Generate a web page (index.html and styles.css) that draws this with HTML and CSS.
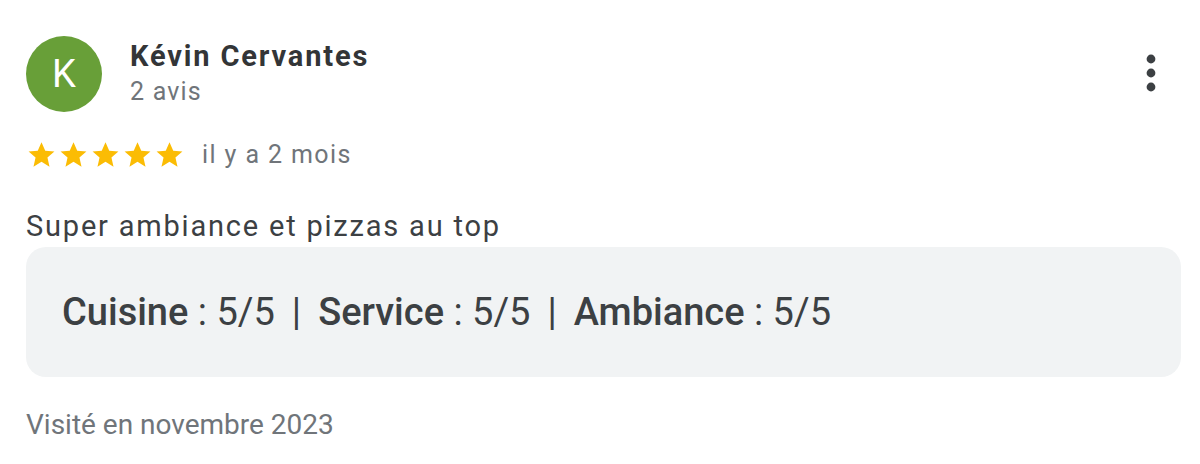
FILE: index.html
```html
<!DOCTYPE html>
<html lang="fr">
<head>
<meta charset="utf-8">
<link rel="stylesheet" href="styles.css">
</head>
<body>
<div class="review">
  <div class="header">
    <div class="avatar">K</div>
    <div class="who">
      <div class="name">Kévin Cervantes</div>
      <div class="count">2 avis</div>
    </div>
    <button class="more" aria-label="Plus">
      <svg width="12" height="40" viewBox="0 0 12 40"><circle cx="6" cy="6" r="4.4"/><circle cx="6" cy="20" r="4.4"/><circle cx="6" cy="34" r="4.4"/></svg>
    </button>
  </div>
  <div class="rating">
    <div class="stars">
      <svg viewBox="0 0 24 24"><path d="M12 2.5l2.9 6.6 7.1.6-5.4 4.7 1.6 7-6.2-3.7-6.2 3.7 1.6-7L2 9.7l7.1-.6z"/></svg>
      <svg viewBox="0 0 24 24"><path d="M12 2.5l2.9 6.6 7.1.6-5.4 4.7 1.6 7-6.2-3.7-6.2 3.7 1.6-7L2 9.7l7.1-.6z"/></svg>
      <svg viewBox="0 0 24 24"><path d="M12 2.5l2.9 6.6 7.1.6-5.4 4.7 1.6 7-6.2-3.7-6.2 3.7 1.6-7L2 9.7l7.1-.6z"/></svg>
      <svg viewBox="0 0 24 24"><path d="M12 2.5l2.9 6.6 7.1.6-5.4 4.7 1.6 7-6.2-3.7-6.2 3.7 1.6-7L2 9.7l7.1-.6z"/></svg>
      <svg viewBox="0 0 24 24"><path d="M12 2.5l2.9 6.6 7.1.6-5.4 4.7 1.6 7-6.2-3.7-6.2 3.7 1.6-7L2 9.7l7.1-.6z"/></svg>
    </div>
    <span class="when">il y a 2 mois</span>
  </div>
  <p class="text">Super ambiance et pizzas au top</p>
  <div class="scores">
    <span><b>Cuisine</b> : 5/5</span><span class="sep">|</span><span><b>Service</b> : 5/5</span><span class="sep">|</span><span><b>Ambiance</b> : 5/5</span>
  </div>
  <div class="visited">Visité en novembre 2023</div>
</div>
</body>
</html>
```
FILE: styles.css
```css
html, body {
  margin: 0;
  padding: 0;
  background: #ffffff;
}
body {
  font-family: Roboto, "Liberation Sans", Arial, sans-serif;
  color: #3c4043;
}
.review {
  padding: 36px 19px 0 26px;
}
.header {
  display: flex;
  align-items: flex-start;
}
.avatar {
  width: 76px;
  height: 76px;
  border-radius: 50%;
  background: #689f38;
  color: #ffffff;
  font-size: 38px;
  line-height: 76px;
  text-align: center;
  flex: none;
}
.who {
  margin-left: 28px;
  flex: 1;
  padding-top: 2px;
}
.name {
  font-size: 29px;
  font-weight: 700;
  letter-spacing: 1.85px;
  color: #333537;
  line-height: 36px;
}
.count {
  margin-top: 3px;
  font-size: 25px;
  letter-spacing: 1.2px;
  color: #70757a;
  line-height: 30px;
}
.more {
  border: 0;
  background: none;
  padding: 0;
  margin-top: 17px;
  margin-right: 24px;
  fill: #3c4043;
}
.more svg { display: block; }
.rating {
  display: flex;
  align-items: center;
  margin-top: 25px;
  height: 34px;
}
.stars {
  display: flex;
  gap: 1px;
}
.stars svg {
  width: 31px;
  height: 31px;
  fill: #fbbc04;
}
.when {
  margin-left: 17px;
  font-size: 25px;
  letter-spacing: 1.4px;
  color: #70757a;
}
.text {
  margin: 38px 0 0;
  font-size: 29px;
  letter-spacing: 1.8px;
  line-height: 34px;
  color: #3c4043;
}
.scores {
  margin-top: 4px;
  background: #f1f3f4;
  border-radius: 20px;
  height: 130px;
  display: flex;
  align-items: center;
  padding-left: 36px;
  padding-bottom: 0;
  box-sizing: border-box;
  font-size: 38px;
  color: #3c4043;
}
.scores b {
  font-weight: 500;
  color: #3c4043;
}
.sep {
  margin: 0 17px;
}
.visited {
  margin-top: 31px;
  font-size: 28px;
  color: #70757a;
}
```
